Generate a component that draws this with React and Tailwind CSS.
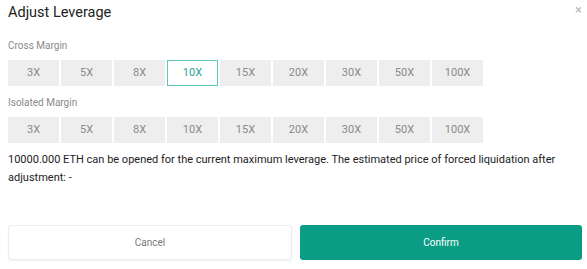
import React, { useState } from 'react';

const LEVELS = ['3X', '5X', '8X', '10X', '15X', '20X', '30X', '50X', '100X'];

function LeverageRow({ value, onPick }) {
  return (
    <div className="flex gap-[2px]">
      {LEVELS.map((lv) => (
        <button
          key={lv}
          type="button"
          onClick={() => onPick(lv)}
          className={`h-[26px] w-[51px] text-[11px] ${
            value === lv
              ? 'bg-white border border-[#5cc9b8] text-[#2aa893]'
              : 'bg-[#eeeeee] text-[#8a8a8a]'
          }`}
        >
          {lv}
        </button>
      ))}
    </div>
  );
}

export default function App() {
  const [cross, setCross] = useState('10X');
  const [isolated, setIsolated] = useState(null);

  return (
    <div className="relative w-[587px] h-[269px] bg-white pl-2 pr-[5px] font-['Roboto',sans-serif]">
      <button type="button" className="absolute right-[5px] top-0 text-[13px] text-[#b5b5b5]">×</button>

      <h1 className="pt-[3px] text-[14.5px] leading-[20px] text-[#222]">Adjust Leverage</h1>

      <div className="mt-[17px] text-[10px] leading-[12px] text-[#8a8a8a]">Cross Margin</div>
      <div className="mt-[8px]">
        <LeverageRow value={cross} onPick={setCross} />
      </div>

      <div className="mt-[11px] text-[10px] leading-[12px] text-[#8a8a8a]">Isolated Margin</div>
      <div className="mt-[8px]">
        <LeverageRow value={isolated} onPick={setIsolated} />
      </div>

      <p className="mt-[8px] text-[11px] leading-[18px] text-[#222]">
        10000.000 ETH can be opened for the current maximum leverage. The estimated price of forced liquidation after adjustment: -
      </p>

      <div className="mt-[38px] flex gap-2">
        <button type="button" className="flex-1 h-[35px] rounded-[3px] border border-[#ececec] shadow-[0_1px_2px_rgba(0,0,0,0.06)] bg-white text-[10px] text-[#777]">
          Cancel
        </button>
        <button type="button" className="flex-1 h-[35px] rounded-[3px] bg-[#0b9c85] text-[10px] text-white">
          Confirm
        </button>
      </div>
    </div>
  );
}
